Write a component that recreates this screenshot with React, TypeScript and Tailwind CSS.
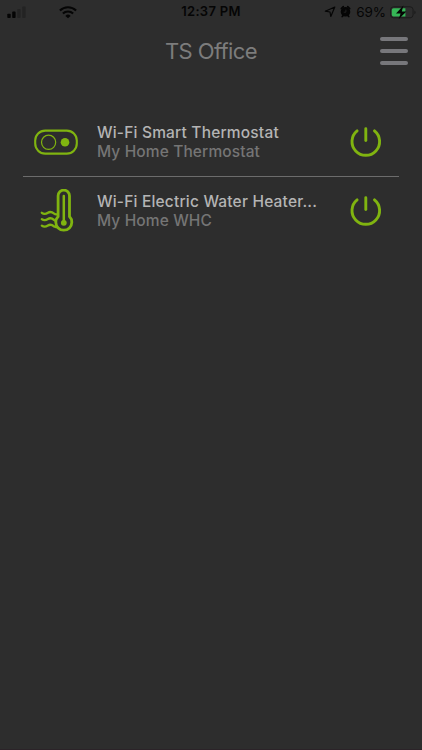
import type { ReactNode } from 'react';

type Device = {
  name: string;
  location: string;
  icon: ReactNode;
};

function SignalIcon() {
  return (
    <svg width="20" height="13" viewBox="0 0 20 13">
      <rect x="0.3" y="7.8" width="3.4" height="4.2" rx="0.8" fill="#050505" />
      <rect x="5.2" y="5.6" width="3.4" height="6.4" rx="0.8" fill="#050505" />
      <rect x="10.2" y="3" width="3.4" height="9" rx="0.8" fill="#232323" />
      <rect x="15.2" y="0.4" width="3.4" height="11.6" rx="0.8" fill="#232323" />
    </svg>
  );
}

function WifiIcon() {
  return (
    <svg width="18" height="13" viewBox="0 0 18 13" fill="none" stroke="#050505" strokeWidth="2.1">
      <path d="M0.9 4.5a11.6 11.6 0 0 1 16.2 0" />
      <path d="M3.9 7.6a7.3 7.3 0 0 1 10.2 0" />
      <path d="M9 12.3 6.4 9.9a3.7 3.7 0 0 1 5.2 0z" fill="#050505" stroke="none" />
    </svg>
  );
}

function StatusIcons() {
  return (
    <svg width="32" height="14" viewBox="0 0 32 14" fill="none">
      <path d="M1.3 6.2 10.8 2 6.8 11.4 6 7z" stroke="#050505" strokeWidth="1.2" strokeLinejoin="round" />
      <circle cx="21.5" cy="6.8" r="4.8" fill="#050505" />
      <path d="M17.3 3.6l2-2M25.7 3.6l-2-2M18.2 11.6l1-1.2M24.8 11.6l-1-1.2" stroke="#050505" strokeWidth="1.6" strokeLinecap="round" />
      <path d="M21.9 4.6v2.6h-2.2" stroke="#2d2d2d" strokeWidth="0.7" />
    </svg>
  );
}

function BatteryIcon() {
  return (
    <svg width="26" height="15" viewBox="0 0 26 15">
      <rect x="0.5" y="1.8" width="22.6" height="11" rx="3" fill="none" stroke="#1b1b1b" />
      <path d="M24.4 5.4c1.6.6 1.6 3.2 0 3.8z" fill="#1b1b1b" />
      <path d="M3.5 3.2H15.4v8.2H3.5A1.8 1.8 0 0 1 1.8 9.7V5a1.8 1.8 0 0 1 1.7-1.8z" fill="#35b656" />
      <path d="M13.4 0.6 6 8.5h4.6L8.6 14.2l7.8-7.8h-4.6z" fill="#050505" />
    </svg>
  );
}

function ThermostatIcon() {
  return (
    <svg width="44" height="26" viewBox="0 0 44 26" fill="none" stroke="#80b410">
      <rect x="1.2" y="1.6" width="41.6" height="23" rx="10" strokeWidth="2.1" />
      <circle cx="14.6" cy="13.3" r="7.1" strokeWidth="1.2" />
      <circle cx="31" cy="13.3" r="4.3" fill="#80b410" stroke="none" />
    </svg>
  );
}

function WaterHeaterIcon() {
  return (
    <svg width="36" height="44" viewBox="0 0 36 44" fill="none" stroke="#80b410" strokeWidth="2.8" strokeLinecap="round">
      <path d="M18.1 27.6V6.8a5.7 5.7 0 0 1 11.4 0v20.8a8 8 0 1 1-11.4 0z" />
      <path d="M23.8 7v26" strokeWidth="2.5" />
      <circle cx="23.8" cy="33.8" r="2.9" fill="#80b410" stroke="none" />
      <path d="M1.8 23.8c2.8 2.2 4.5 1 6.2-.1 2.5-1.7 4.2-.6 6.2 1 .8.6 1.6.8 2.5.6" strokeWidth="2.3" />
      <path d="M1.8 30.1c2.8 2.2 4.5 1 6.2-.1 2.5-1.7 4.2-.6 6.2 1l1.2.6" strokeWidth="2.3" />
      <path d="M1.8 36.6c2.8 2.2 4.5 1 6.2-.1 2.5-1.7 4.2-.6 6.2 1l2 .7" strokeWidth="2.3" />
    </svg>
  );
}

function PowerIcon() {
  return (
    <svg width="32" height="32" viewBox="0 0 32 32" fill="none" stroke="#80b410" strokeWidth="2.9" strokeLinecap="round">
      <path d="M7.1 4.8a13.8 13.8 0 1 0 17.4 0" />
      <path d="M15.8 2.7v11.8" />
    </svg>
  );
}

const devices: Device[] = [
  { name: 'Wi-Fi Smart Thermostat', location: 'My Home Thermostat', icon: <ThermostatIcon /> },
  { name: 'Wi-Fi Electric Water Heater...', location: 'My Home WHC', icon: <div className="pl-[3px]"><WaterHeaterIcon /></div> },
];

function StatusBar() {
  return (
    <div className="grid h-6 grid-cols-3 items-center text-[#050505]">
      <div className="flex items-center gap-[32px] pl-[7px]">
        <SignalIcon />
        <WifiIcon />
      </div>
      <span className="text-center text-[13px] font-semibold tracking-[0.3px]">12:37 PM</span>
      <div className="flex items-center justify-end pr-[6px]">
        <StatusIcons />
        <span className="mr-[4px] text-[13.5px] tracking-[-0.1px]">69%</span>
        <BatteryIcon />
      </div>
    </div>
  );
}

function DeviceRow({ device }: { device: Device }) {
  return (
    <li className="flex h-[69px] items-center border-b border-[#6c6c6c] last:border-transparent">
      <div className="flex w-[74px] pl-[11px]">
        <div className="flex w-11 justify-center">{device.icon}</div>
      </div>
      <div className="w-[253px] text-[15.5px] leading-[19px] font-medium whitespace-nowrap">
        <div className="tracking-[0.19px] text-[#b4b4b4]">{device.name}</div>
        <div className="tracking-[0.12px] text-[#757575]">{device.location}</div>
      </div>
      <button aria-label="Power">
        <PowerIcon />
      </button>
    </li>
  );
}

export default function App() {
  return (
    <div className="flex h-[750px] w-[422px] flex-col border-b border-[#2b2328] bg-[#2d2d2d] font-['Inter',sans-serif]">
      <StatusBar />
      <header className="grid h-[54px] grid-cols-[1fr_auto_1fr] items-center">
        <h1 className="col-start-2 text-[22px] font-normal tracking-[-0.6px] text-[#7c7c7c]">TS Office</h1>
        <button className="mr-[14px] flex flex-col gap-2 justify-self-end" aria-label="Menu">
          <span className="h-1 w-7 rounded-full bg-[#77777b]" />
          <span className="h-1 w-7 rounded-full bg-[#77777b]" />
          <span className="h-1 w-7 rounded-full bg-[#77777b]" />
        </button>
      </header>
      <ul className="mx-[23px] mt-[30px]">
        {devices.map((device) => (
          <DeviceRow key={device.name} device={device} />
        ))}
      </ul>
    </div>
  );
}
